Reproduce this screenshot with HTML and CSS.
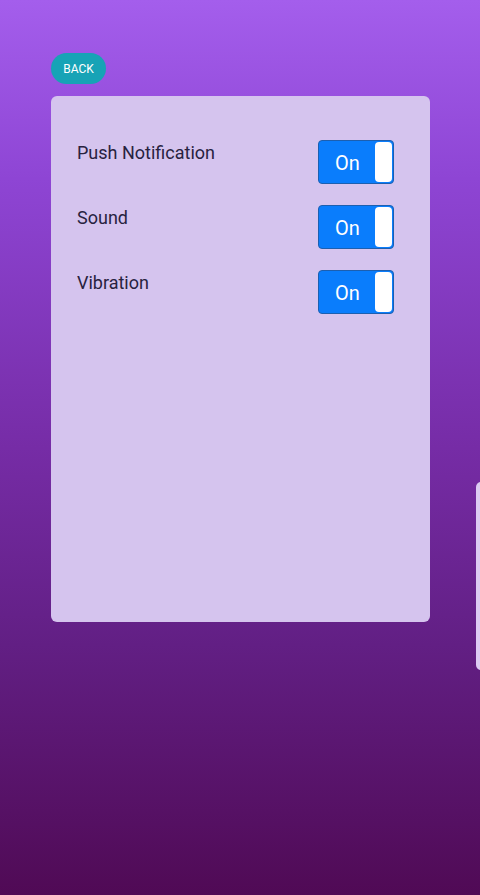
FILE: index.html
```html
<!DOCTYPE html>
<html lang="en">
<head>
  <meta charset="UTF-8">
  <title>Settings</title>
  <link rel="stylesheet" href="styles.css">
</head>
<body>

<div class="screen">
  <button class="back-btn">BACK</button>

  <div class="card">
    <div class="row">
      <span class="label">Push Notification</span>
      <div class="toggle"><span class="toggle-text">On</span><span class="knob"></span></div>
    </div>
    <div class="row">
      <span class="label">Sound</span>
      <div class="toggle"><span class="toggle-text">On</span><span class="knob"></span></div>
    </div>
    <div class="row">
      <span class="label">Vibration</span>
      <div class="toggle"><span class="toggle-text">On</span><span class="knob"></span></div>
    </div>
  </div>

  <div class="side-panel"></div>
</div>

</body>
</html>
```

FILE: styles.css
```css
body {
  margin: 0;
  font-family: Roboto, "Noto Sans", sans-serif;
}
.screen {
  position: relative;
  height: 895px;
  overflow: hidden;
  padding: 53px 50px 0 51px;
  box-sizing: border-box;
  background: linear-gradient(to bottom, #a45eec 0%, #8e45d4 20%, #762ca6 50%, #621f84 72%, #500a55 100%);
}
.back-btn {
  display: block;
  width: 55px;
  height: 31px;
  border: none;
  border-radius: 16px;
  background: #17a3b6;
  color: #fff;
  font-family: Roboto, sans-serif;
  font-size: 12px;
  padding: 0;
  margin: 0 0 12px;
}
.card {
  height: 526px;
  box-sizing: border-box;
  background: #d5c4ee;
  border-radius: 6px;
  padding: 44px 36px 0 26px;
  display: flex;
  flex-direction: column;
  gap: 21px;
}
.row {
  display: flex;
  justify-content: space-between;
  align-items: flex-start;
}
.label {
  font-size: 18px;
  line-height: 24px;
  margin-top: 1px;
  color: #28223f;
}
.toggle {
  width: 76px;
  height: 44px;
  box-sizing: border-box;
  background: #0a7dfc;
  border: 1px solid #1c5fb0;
  border-radius: 4px;
  display: flex;
  align-items: center;
  padding: 1px;
}
.toggle-text {
  flex: 1;
  text-align: center;
  color: #fff;
  font-size: 20px;
  padding-top: 2px;
}
.knob {
  width: 17px;
  height: 40px;
  background: #fff;
  border-radius: 4px;
}
.side-panel {
  position: absolute;
  left: 476px;
  top: 482px;
  width: 20px;
  height: 188px;
  background: #dccbf2;
  border-radius: 5px;
}
```
